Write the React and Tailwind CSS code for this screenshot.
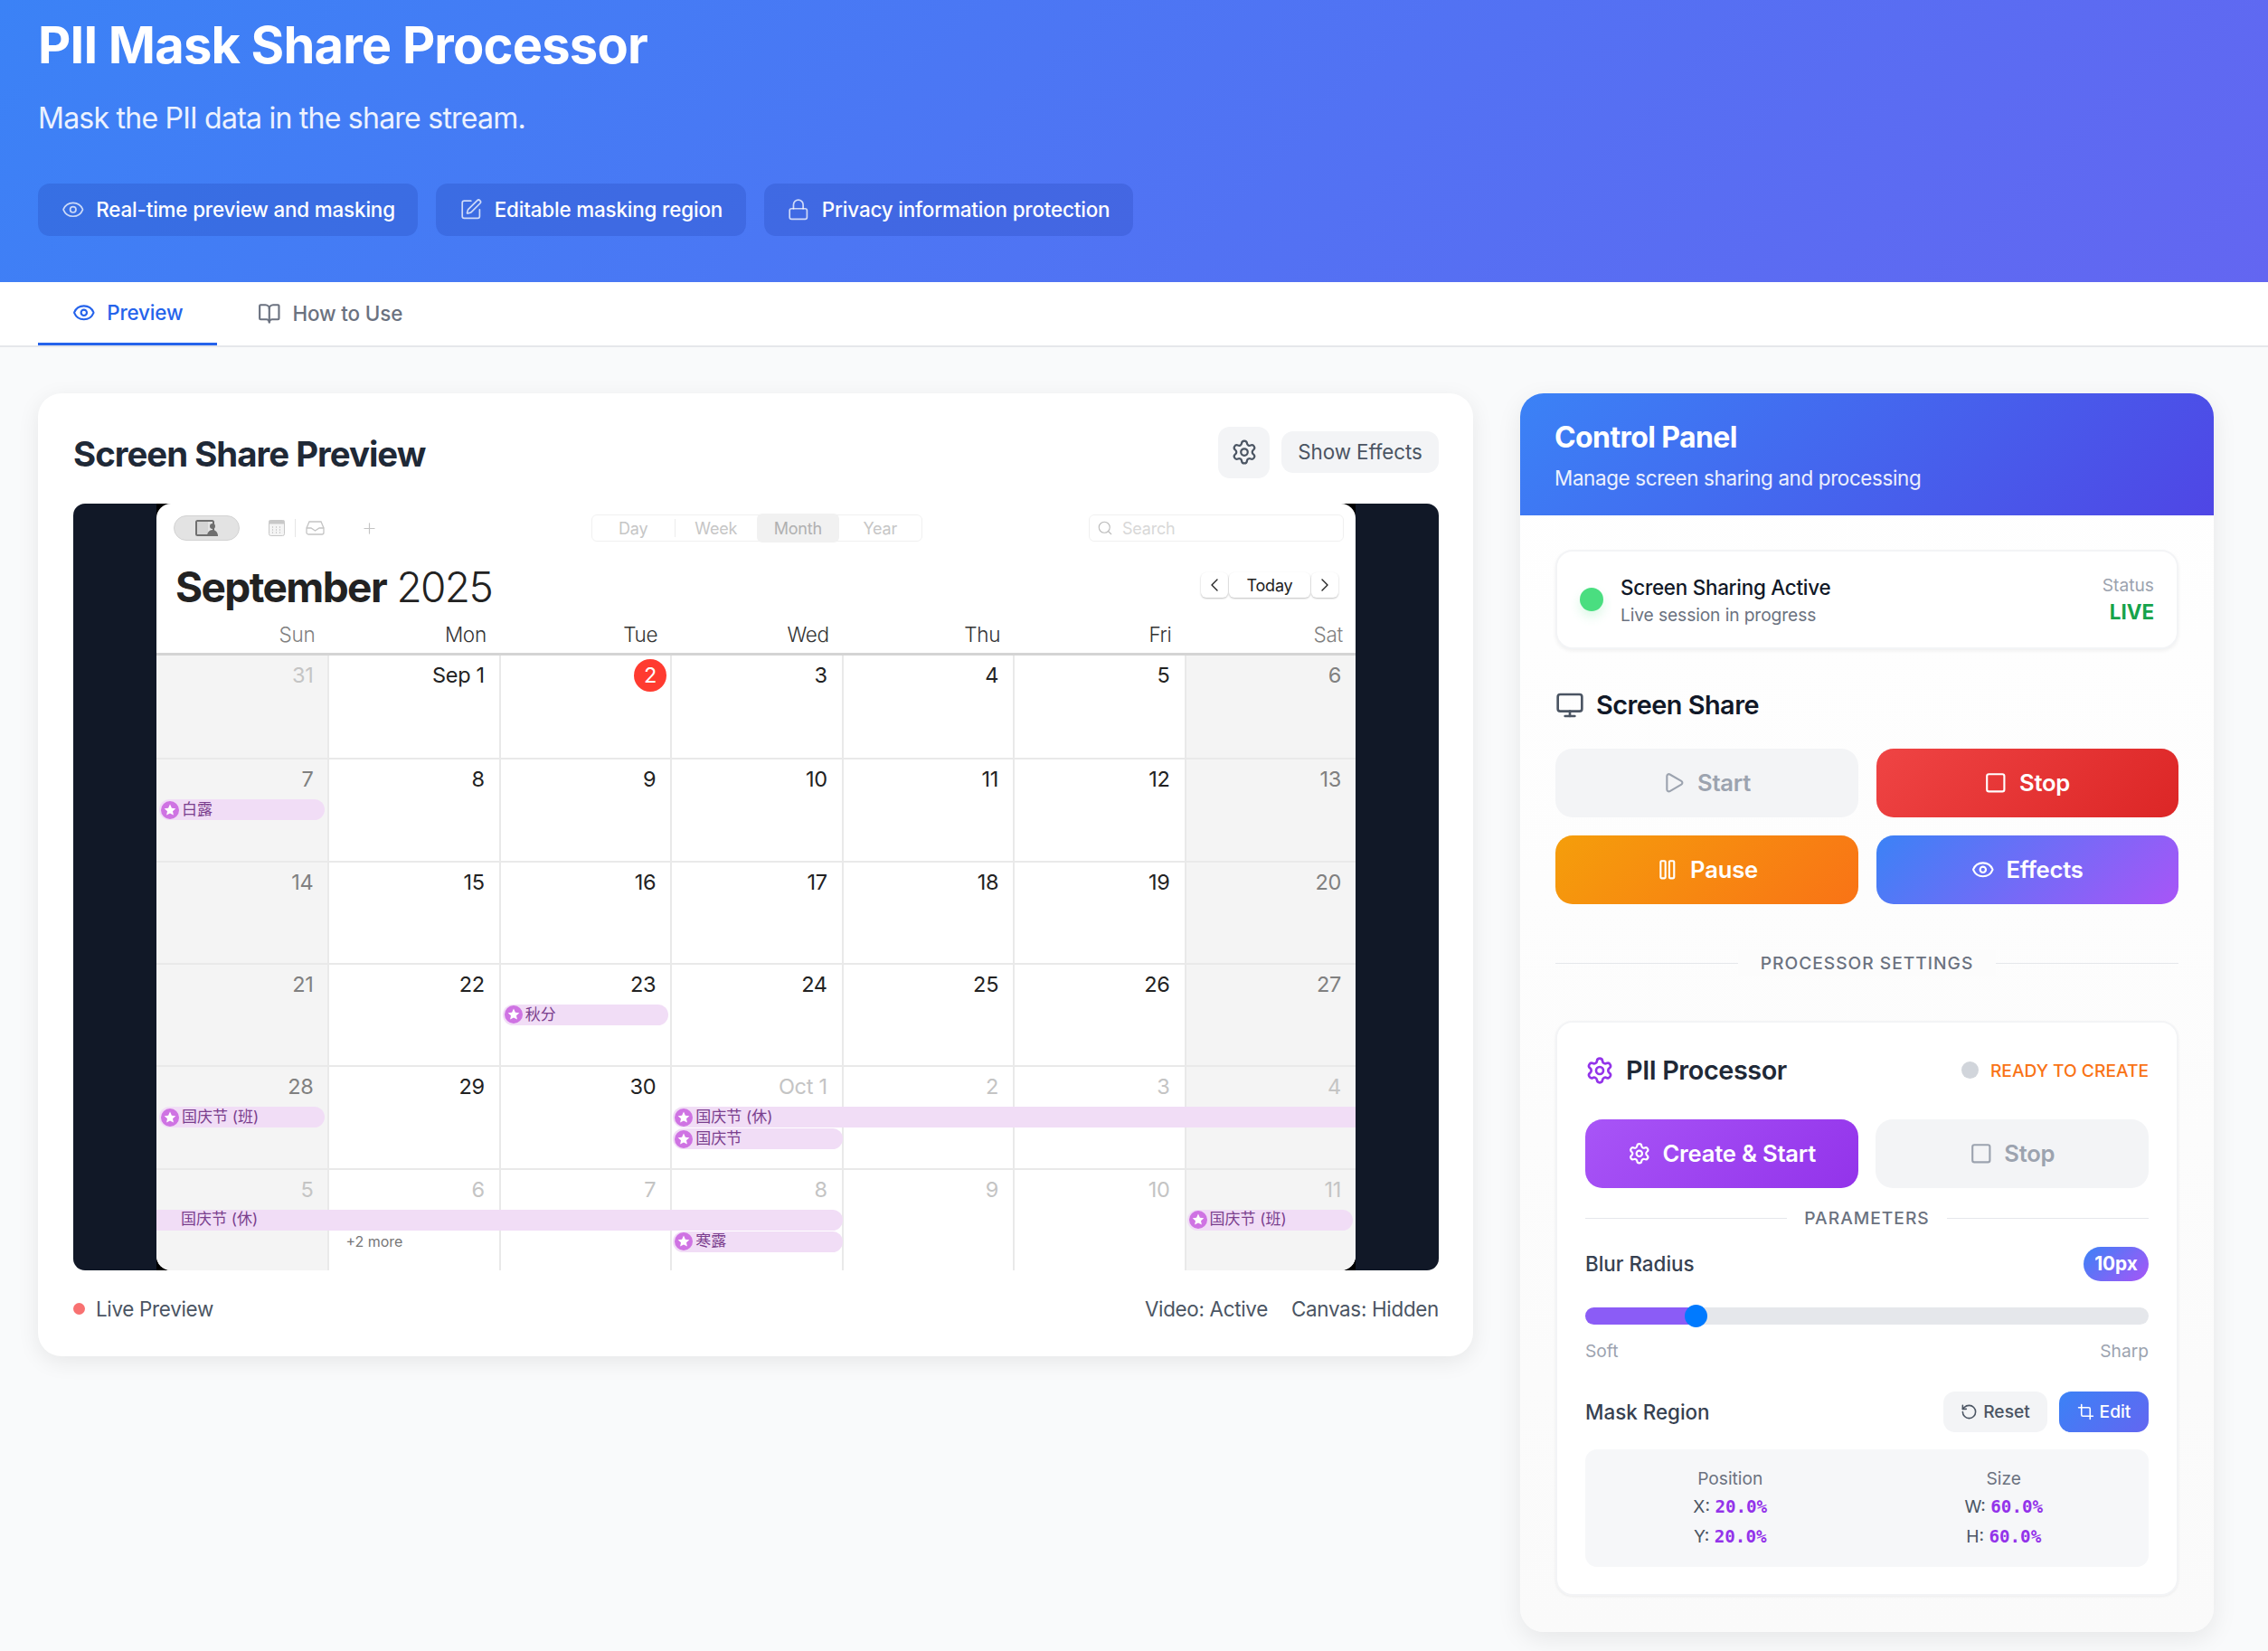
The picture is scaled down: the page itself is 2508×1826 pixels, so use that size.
import React from "react";
import { Eye, SquarePen, Lock, BookOpen, Settings, Monitor, Play, Square, Pause, RotateCcw, Crop, Search, ChevronLeft, ChevronRight, Plus } from "lucide-react";

const COLS = ["col-start-1", "col-start-2", "col-start-3", "col-start-4", "col-start-5", "col-start-6", "col-start-7"];

const WEEKS = [
  {
    days: [["31", "o"], ["Sep 1", "n"], ["2", "t"], ["3", "n"], ["4", "n"], ["5", "n"], ["6", "w"]],
    events: [],
  },
  {
    days: [["7", "w"], ["8", "n"], ["9", "n"], ["10", "n"], ["11", "n"], ["12", "n"], ["13", "w"]],
    events: [{ c: "col-start-1 col-span-1 row-start-2 ml-[3px] mr-[3px] rounded-full", t: "白露", dot: true }],
  },
  {
    days: [["14", "w"], ["15", "n"], ["16", "n"], ["17", "n"], ["18", "n"], ["19", "n"], ["20", "w"]],
    events: [],
  },
  {
    days: [["21", "w"], ["22", "n"], ["23", "n"], ["24", "n"], ["25", "n"], ["26", "n"], ["27", "w"]],
    events: [{ c: "col-start-3 col-span-1 row-start-2 ml-[4px] mr-[2px] rounded-full", t: "秋分", dot: true }],
  },
  {
    days: [["28", "w"], ["29", "n"], ["30", "n"], ["Oct 1", "o"], ["2", "o"], ["3", "o"], ["4", "o"]],
    events: [
      { c: "col-start-1 col-span-1 row-start-2 ml-[3px] mr-[3px] rounded-full", t: "国庆节 (班)", dot: true },
      { c: "col-start-4 col-span-4 row-start-2 ml-[3px] rounded-l-full", t: "国庆节 (休)", dot: true },
      { c: "col-start-4 col-span-1 row-start-4 ml-[3px] mr-[-1px] rounded-full", t: "国庆节", dot: true },
    ],
  },
  {
    days: [["5", "o"], ["6", "o"], ["7", "o"], ["8", "o"], ["9", "o"], ["10", "o"], ["11", "o"]],
    events: [
      { c: "col-start-1 col-span-4 row-start-2 mr-[-1px] rounded-r-full pl-[27px]", t: "国庆节 (休)", dot: false },
      { c: "col-start-4 col-span-1 row-start-4 ml-[3px] mr-[-1px] rounded-full", t: "寒露", dot: true },
      { c: "col-start-7 col-span-1 row-start-2 ml-[3px] mr-[3px] rounded-full", t: "国庆节 (班)", dot: true },
    ],
    more: true,
  },
];

const DAY_COLOR = { n: "text-[#222222]", w: "text-[#808080]", o: "text-[#c4c4c4]", t: "text-white" };

function StarDot() {
  return (
    <svg width="20" height="20" viewBox="0 0 20 20" className="shrink-0">
      <circle cx="10" cy="10" r="10" fill="#cf73e3" />
      <path d="M10 3.6l1.9 4.1 4.4.5-3.3 3 .9 4.4-3.9-2.2-3.9 2.2.9-4.4-3.3-3 4.4-.5z" fill="#fff" />
    </svg>
  );
}

function Calendar() {
  return (
    <div className="bg-black h-full">
      <div className="bg-white h-full rounded-[16px] overflow-hidden flex flex-col font-['Inter','Noto_Sans_CJK_SC',sans-serif]">
        <div className="h-[54px] flex items-center pl-[19px] pt-[0px]">
          <div className="w-[73px] h-[28px] rounded-full bg-[#e3e3e3] border border-[#d2d2d2] flex items-center justify-center">
            <svg width="26" height="18" viewBox="0 0 26 18" fill="none">
              <rect x="1" y="1" width="19" height="16" rx="1.5" stroke="#6f6f6f" strokeWidth="2" />
              <path d="M2 2h12v14H2z" fill="#d4d4d4" />
              <circle cx="19" cy="7" r="3" fill="#6f6f6f" />
              <path d="M13 18c0-4 2.5-7 6-7s6 3 6 7z" fill="#6f6f6f" />
            </svg>
          </div>
          <svg width="18" height="18" viewBox="0 0 18 18" fill="none" className="ml-[32px]">
            <rect x="0.5" y="0.5" width="17" height="17" rx="2" fill="#f4f4f4" stroke="#c8c8c8" />
            <rect x="0.5" y="0.5" width="17" height="4" fill="#c8c8c8" />
            <path d="M4 8h1M8 8h1M12 8h1M4 11h1M8 11h1M12 11h1M4 14h1M8 14h1M12 14h1" stroke="#aaaaaa" strokeWidth="1" />
          </svg>
          <div className="w-px h-[20px] bg-[#e6e6e6] ml-[11px]" />
          <svg width="21" height="16" viewBox="0 0 21 16" fill="none" className="ml-[11px]">
            <path d="M1 8l3-7h13l3 7v5a2 2 0 0 1-2 2H3a2 2 0 0 1-2-2z M1 8h5l4.500 3 4.500-3h5" stroke="#c4c4c4" strokeWidth="1.300" />
          </svg>
          <Plus size={19} strokeWidth={1.5} className="text-[#c4c4c4] ml-[40px]" />
          <div className="ml-[236px] w-[366px] h-[30px] rounded-[6px] border border-[#f0f0f0] flex items-center text-[18px] tracking-[-0.2px] text-[#c6c6c6] relative">
            <div className="w-[91px] text-center">Day</div>
            <div className="w-px h-[20px] bg-[#ececec]" />
            <div className="w-[91px] text-center">Week</div>
            <div className="w-[91px] h-[32px] bg-[#f1f1f1] rounded-[6px] flex items-center justify-center text-[#b0b0b0]">Month</div>
            <div className="w-[92px] text-center">Year</div>
          </div>
          <div className="ml-[184px] w-[282px] h-[30px] rounded-[6px] border border-[#f0f0f0] flex items-center pl-[8px] gap-[10px] text-[18px] tracking-[-0.2px] text-[#d8d8d8]">
            <Search size={18} strokeWidth={1.5} className="text-[#bcbcbc]" />
            Search
          </div>
        </div>
        <div className="h-[76px] flex items-center justify-between pl-[21px] pr-[19px]">
          <div className="text-[46px] leading-[56px] tracking-[-1.6px] text-[#222222]">
            <span className="font-bold">September</span> <span className="font-light">2025</span>
          </div>
          <div className="flex items-center gap-[1px] text-[18px] tracking-[-0.2px] text-[#222222] -mt-[4px]">
            <div className="w-[30px] h-[28px] rounded-[6px] bg-white shadow-[0_1px_2px_rgba(0,0,0,0.25)] flex items-center justify-center"><ChevronLeft size={24} strokeWidth={1.4} /></div>
            <div className="w-[90px] h-[28px] rounded-[6px] bg-white shadow-[0_1px_2px_rgba(0,0,0,0.25)] flex items-center justify-center">Today</div>
            <div className="w-[30px] h-[28px] rounded-[6px] bg-white shadow-[0_1px_2px_rgba(0,0,0,0.25)] flex items-center justify-center"><ChevronRight size={24} strokeWidth={1.4} /></div>
          </div>
        </div>
        <div className="h-[38px] grid grid-cols-7 border-b-[3px] border-[#d4d4d4] text-[22.5px] leading-[29px] font-light tracking-[-0.3px]">
          {["Sun", "Mon", "Tue", "Wed", "Thu", "Fri", "Sat"].map((d) => (
            <div key={d} className={`text-right pr-[14px] ${d === "Sun" || d === "Sat" ? "text-[#808080]" : "text-[#333333]"}`}>{d}</div>
          ))}
        </div>
        <div className="flex-1 flex flex-col min-h-0">
          {WEEKS.map((w, i) => (
            <div key={i} className="flex-1 grid grid-cols-7 grid-rows-[46px_23px_1px_23px_1fr] min-h-0">
              {w.days.map(([label, kind], j) => (
                <div
                  key={j}
                  className={`${COLS[j]} row-start-1 row-end-6 ${i > 0 ? "border-t-2" : ""} border-[#e9e9e9] ${j > 0 ? "border-l-2" : ""} ${j === 0 || j === 6 ? "bg-[#f4f4f4]" : "bg-white"} flex justify-end`}
                >
                  {kind === "t" ? (
                    <div className="w-[36px] h-[36px] mt-[4px] mr-[4px] rounded-full bg-[#ff3b30] text-white text-[23.5px] flex items-center justify-center">{label}</div>
                  ) : (
                    <div className={`text-[23.5px] leading-[30px] mt-[7px] pr-[16px] tracking-[-0.3px] ${DAY_COLOR[kind]}`}>{label}</div>
                  )}
                </div>
              ))}
              {w.events.map((e, k) => (
                <div key={k} className={`${e.c} h-[23px] bg-[#f1ddf6] flex items-center gap-[3px] pl-[2px] text-[17px] text-[#7b3f8e] overflow-hidden whitespace-nowrap z-10`}>
                  {e.dot && <StarDot />}
                  <span>{e.t}</span>
                </div>
              ))}
              {w.more && (
                <div className="col-start-2 row-start-4 z-10 text-[16px] text-[#777777] pl-[20px] leading-[23px]">+2 more</div>
              )}
            </div>
          ))}
        </div>
      </div>
    </div>
  );
}

function Chip({ icon: I, children }) {
  return (
    <div className="h-[58px] px-[25.6px] rounded-[13px] bg-[rgba(30,64,175,0.25)] flex items-center gap-[13px] text-[22.4px] tracking-[-0.16px] font-medium text-white">
      <I size={25.6} strokeWidth={1.6} className="text-white/75" />
      <span>{children}</span>
    </div>
  );
}

function Divider({ label, bg }) {
  return (
    <div className="flex items-center h-[30px]">
      <div className="flex-1 h-px bg-[#e5e7eb]" />
      <div className={`px-[19px] text-[19.2px] font-medium tracking-[1px] text-[#6b7280] ${bg}`}>{label}</div>
      <div className="flex-1 h-px bg-[#e5e7eb]" />
    </div>
  );
}

function BigBtn({ icon: I, label, cls, h = "h-[76px]" }) {
  return (
    <div className={`${h} rounded-[19px] flex items-center justify-center gap-[13px] text-[25.6px] tracking-[-0.2px] font-semibold ${cls}`}>
      <I size={25.6} strokeWidth={2} />
      <span>{label}</span>
    </div>
  );
}

const MONO = "font-['DejaVu_Sans_Mono',monospace] font-bold text-[#9333ea]";

export default function App() {
  return (
    <div className="w-[2508px] h-[1826px] overflow-hidden bg-[#f9fafb] font-['Inter','Noto_Sans_CJK_SC',sans-serif] flex flex-col">
      <header className="h-[312px] bg-[linear-gradient(135deg,#3b82f6,#6366f1)] px-[42px] pt-[16px] shrink-0">
        <h1 className="text-[56px] leading-[68px] font-bold tracking-[-0.8px] text-white">PII Mask Share Processor</h1>
        <p className="text-[32px] leading-[44px] tracking-[-0.76px] text-white/90 mt-[25px]">Mask the PII data in the share stream.</p>
        <div className="flex gap-[20px] mt-[50px]">
          <Chip icon={Eye}>Real-time preview and masking</Chip>
          <Chip icon={SquarePen}>Editable masking region</Chip>
          <Chip icon={Lock}>Privacy information protection</Chip>
        </div>
      </header>

      <nav className="h-[72px] bg-white border-b-2 border-[#e5e7eb] px-[42px] flex shrink-0 text-[22.4px] tracking-[-0.15px] font-medium">
        <div className="w-[198px] h-[70px] border-b-[3px] border-[#2563eb] flex items-center justify-center gap-[13px] text-[#2563eb]">
          <Eye size={25.6} strokeWidth={2} />
          <span>Preview</span>
        </div>
        <div className="px-[45px] flex items-center gap-[13px] text-[#6b7280]">
          <BookOpen size={25.6} strokeWidth={2} />
          <span>How to Use</span>
        </div>
      </nav>

      <main className="flex-1 flex items-start px-[42px] pt-[51px] gap-[52px] min-h-0">
        <section className="w-[1587px] h-[1065px] bg-white rounded-[26px] shadow-[0_6px_24px_rgba(0,0,0,0.08)] pl-[39px] pr-[38px] flex flex-col">
          <div className="h-[122px] flex items-center justify-between">
            <h2 className="text-[38.4px] leading-[52px] mt-[12px] font-bold tracking-[-1px] text-[#1f2937]">Screen Share Preview</h2>
            <div className="flex items-center gap-[13px] mt-[8px]">
              <div className="w-[57px] h-[57px] rounded-[13px] bg-[#f3f4f6] flex items-center justify-center text-[#4b5563]">
                <Settings size={30} strokeWidth={1.8} />
              </div>
              <div className="w-[174px] h-[46px] rounded-[13px] bg-[#f3f4f6] flex items-center justify-center text-[22.4px] tracking-[-0.1px] text-[#4b5563]">Show Effects</div>
            </div>
          </div>
          <div className="h-[848px] w-[1510px] bg-[#111827] rounded-[13px] overflow-hidden px-[92px]">
            <Calendar />
          </div>
          <div className="h-[86px] flex items-center justify-between text-[22.4px] tracking-[-0.3px] text-[#4b5563]">
            <div className="flex items-center gap-[12px]">
              <div className="w-[13px] h-[13px] rounded-full bg-[#f87171]" />
              <span>Live Preview</span>
            </div>
            <div className="flex gap-[26px]">
              <span>Video: Active</span>
              <span>Canvas: Hidden</span>
            </div>
          </div>
        </section>

        <aside className="w-[767px] h-[1370px] rounded-[26px] bg-[linear-gradient(180deg,#ffffff,#fafafa)] shadow-[0_8px_28px_rgba(0,0,0,0.08)] flex flex-col overflow-hidden">
          <div className="h-[135px] bg-[linear-gradient(135deg,#3b82f6,#4f46e5)] px-[38px] pt-[28px] shrink-0">
            <h3 className="text-[32px] leading-[42px] font-bold tracking-[-0.6px] text-white">Control Panel</h3>
            <p className="text-[22.4px] leading-[32px] tracking-[-0.35px] text-white/90 mt-[8px]">Manage screen sharing and processing</p>
          </div>
          <div className="pl-[39px] pr-[39px] pt-[38px] flex-1 flex flex-col">
            <div className="h-[110px] rounded-[19px] bg-white border-2 border-[#f3f4f6] shadow-[0_2px_4px_rgba(0,0,0,0.06)] flex items-center pl-[25px] pr-[25px]">
              <div className="w-[26px] h-[26px] rounded-full bg-[#4ade80] shadow-[0_6px_12px_rgba(74,222,128,0.2)]" />
              <div className="ml-[19px] flex-1 pt-[2px]">
                <div className="text-[22.4px] leading-[32px] font-medium tracking-[-0.24px] text-[#111827]">Screen Sharing Active</div>
                <div className="text-[19.2px] leading-[28px] tracking-[-0.1px] text-[#6b7280]">Live session in progress</div>
              </div>
              <div className="text-right">
                <div className="text-[19.2px] leading-[28px] text-[#9ca3af]">Status</div>
                <div className="text-[22.4px] leading-[32px] font-bold text-[#16a34a]">LIVE</div>
              </div>
            </div>

            <div className="h-[40px] mt-[42px] flex items-center gap-[13px] text-[#1f2937]">
              <Monitor size={32} strokeWidth={2} className="text-[#4b5563]" />
              <span className="text-[28.8px] font-semibold tracking-[-0.5px] text-[#111827]">Screen Share</span>
            </div>

            <div className="grid grid-cols-2 gap-x-[20px] gap-y-[20px] mt-[28px]">
              <BigBtn icon={Play} label="Start" cls="bg-[#f3f4f6] text-[#9ca3af] font-medium" />
              <BigBtn icon={Square} label="Stop" cls="bg-[linear-gradient(135deg,#ef4444,#dc2626)] text-white" />
              <BigBtn icon={Pause} label="Pause" cls="bg-[linear-gradient(135deg,#f59e0b,#f97316)] text-white" />
              <BigBtn icon={Eye} label="Effects" cls="bg-[linear-gradient(135deg,#3b82f6,#a855f7)] text-white" />
            </div>

            <div className="mt-[50px]">
              <Divider label="PROCESSOR SETTINGS" bg="bg-[#fcfcfc] px-[25px]" />
            </div>

            <div className="mt-[49px] h-[636px] rounded-[19px] bg-white border-2 border-[#f3f4f6] shadow-[0_1px_3px_rgba(0,0,0,0.06)] px-[31px] pt-[33px]">
              <div className="h-[40px] flex items-center justify-between">
                <div className="flex items-center gap-[13px]">
                  <Settings size={32} strokeWidth={2} className="text-[#9333ea]" />
                  <span className="text-[28.8px] font-semibold tracking-[-0.4px] text-[#1f2937]">PII Processor</span>
                </div>
                <div className="flex items-center gap-[13px]">
                  <div className="w-[19px] h-[19px] rounded-full bg-[#d1d5db]" />
                  <span className="text-[19.2px] font-medium text-[#f97316]">READY TO CREATE</span>
                </div>
              </div>
              <div className="grid grid-cols-2 gap-[19px] mt-[34px]">
                <BigBtn icon={Settings} label="Create & Start" cls="bg-[linear-gradient(135deg,#a855f7,#9333ea)] text-white" />
                <BigBtn icon={Square} label="Stop" cls="bg-[#f3f4f6] text-[#9ca3af] font-medium" />
              </div>
              <div className="mt-[18px]">
                <Divider label="PARAMETERS" bg="" />
              </div>
              <div className="flex items-center justify-between mt-[17px] h-[38px]">
                <span className="text-[22.4px] font-medium text-[#374151]">Blur Radius</span>
                <span className="w-[72px] h-[38px] rounded-full bg-[linear-gradient(135deg,#3b82f6,#a855f7)] flex items-center justify-center text-[20.8px] font-bold text-white">10px</span>
              </div>
              <div className="relative h-[19px] rounded-full bg-[#e5e7eb] mt-[29px]">
                <div className="h-full w-[122px] rounded-l-full bg-[#8b5cf6]" />
                <div className="absolute left-[110px] -top-[3px] w-[25px] h-[25px] rounded-full bg-[#007aff]" />
              </div>
              <div className="flex justify-between mt-[16px] h-[26px] items-center text-[19.2px] text-[#9ca3af]">
                <span>Soft</span>
                <span>Sharp</span>
              </div>
              <div className="flex items-center justify-between mt-[32px] h-[45px]">
                <span className="text-[22.4px] font-medium text-[#374151]">Mask Region</span>
                <div className="flex gap-[13px]">
                  <div className="w-[115px] h-[45px] rounded-[13px] bg-[#f3f4f6] flex items-center justify-center gap-[6px] text-[19.2px] font-medium text-[#4b5563]">
                    <RotateCcw size={19} strokeWidth={2} />
                    Reset
                  </div>
                  <div className="w-[99px] h-[45px] rounded-[13px] bg-[linear-gradient(135deg,#3b82f6,#6366f1)] flex items-center justify-center gap-[6px] text-[19.2px] font-medium text-white">
                    <Crop size={19} strokeWidth={2} />
                    Edit
                  </div>
                </div>
              </div>
              <div className="h-[130px] mt-[19px] rounded-[13px] bg-[#f6f7f9] grid grid-cols-2 gap-x-[34px] px-[26px] pt-[17px] text-center text-[19.2px] leading-[32px] text-[#4b5563]">
                <div>
                  <div className="text-[#6b7280] leading-[30px]">Position</div>
                  <div>X: <span className={MONO}>20.0%</span></div>
                  <div>Y: <span className={MONO}>20.0%</span></div>
                </div>
                <div>
                  <div className="text-[#6b7280] leading-[30px]">Size</div>
                  <div>W: <span className={MONO}>60.0%</span></div>
                  <div>H: <span className={MONO}>60.0%</span></div>
                </div>
              </div>
            </div>
          </div>
        </aside>
      </main>
    </div>
  );
}
